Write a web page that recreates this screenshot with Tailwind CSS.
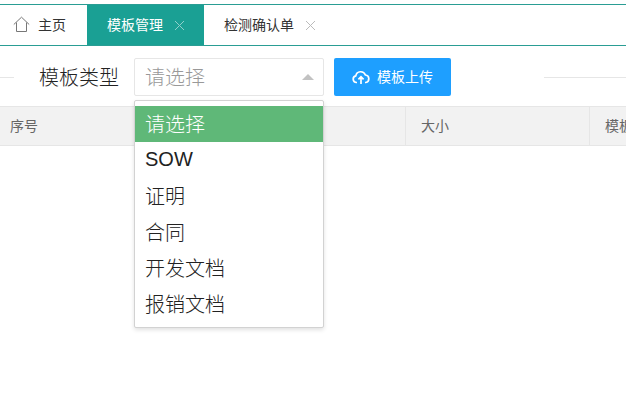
<!DOCTYPE html>
<html lang="zh-CN">
<head>
    <meta charset="UTF-8">
    <meta name="viewport" content="width=device-width, initial-scale=1.0">
    <title>模板管理</title>
    <script src="https://cdn.jsdelivr.net/npm/@tailwindcss/browser@4"></script>
</head>
<body class="bg-white h-[419px] w-[626px] overflow-hidden font-['Liberation_Sans','Noto_Sans_CJK_SC',sans-serif]">
    <!-- Tabs -->
    <div class="mt-1 h-[42px] border-y border-[#2a9d94] flex items-stretch text-[14px] text-[#333]">
        <div class="w-[87px] flex items-center pl-[13px]">
            <svg class="w-[17px] h-[17px] mr-2 -mt-[2px]" viewBox="0 0 17 17" fill="none" stroke="#777" stroke-width="1"><path d="M.8 8.5 8.5 1.2 16.2 8.5"/><path d="M3.5 6.5v9h10v-9"/></svg>
            <span>主页</span>
        </div>
        <div class="w-[117px] bg-[#1aa094] text-white flex items-center pl-5">
            <span>模板管理</span>
            <svg class="w-[11px] h-[11px] ml-[11px]" viewBox="0 0 11 11" stroke="#8fd0ca" stroke-width="1"><path d="M1 1l9 9M10 1l-9 9"/></svg>
        </div>
        <div class="flex items-center pl-5">
            <span>检测确认单</span>
            <svg class="w-[11px] h-[11px] ml-[11px]" viewBox="0 0 11 11" stroke="#bbb" stroke-width="1"><path d="M1 1l9 9M10 1l-9 9"/></svg>
        </div>
    </div>

    <!-- Toolbar -->
    <div class="mt-3 h-[38px] flex items-center">
        <div class="w-[14px] h-px bg-[#e6e6e6]"></div>
        <label class="ml-[25px] w-[95px] pt-[2px] text-[20px] text-[#222] font-light">模板类型</label>
        <div class="relative w-[190px] h-[38px] border border-[#e6e6e6] rounded-[2px] flex items-center justify-between pl-[10px] pr-[9px] text-[20px] text-[#999] font-light">
            <span class="pt-[2px]">请选择</span>
            <span class="w-0 h-0 border-x-[6px] border-x-transparent border-b-[6px] border-b-[#c2c2c2]"></span>
        </div>
        <button class="ml-[10px] w-[117px] h-[38px] bg-[#1e9fff] rounded-[2px] text-white text-[14px] flex items-center pl-[18px]">
            <svg class="w-[18px] h-[16px] mr-[7px] -mt-[1px]" viewBox="0 0 18 16" fill="none" stroke="#fff" stroke-width="1.7"><path d="M5 13.5H4.4A3.4 3.4 0 0 1 3.8 6.8 5 5 0 0 1 13.4 6 3.8 3.8 0 0 1 13.8 13.5H13"/><path d="M9 15V8M6.4 10.4 9 7.8l2.6 2.6"/></svg>
            <span>模板上传</span>
        </button>
        <div class="ml-[93px] flex-1 h-px bg-[#e6e6e6]"></div>
    </div>

    <!-- Table header -->
    <div class="mt-[10px] h-10 bg-[#f2f2f2] border-y border-[#e6e6e6] flex items-center text-[14px] text-[#666]">
        <div class="w-[405px] pl-[10px]">序号</div>
        <div class="w-[184px] h-full border-l border-[#e6e6e6] pl-[15px] flex items-center">大小</div>
        <div class="flex-1 h-full border-l border-[#e6e6e6] pl-[15px] flex items-center whitespace-nowrap overflow-hidden">模板名称</div>
    </div>

    <!-- Dropdown -->
    <div class="absolute left-[134px] top-[100px] w-[190px] h-[228px] bg-white border border-[#d2d2d2] rounded-[2px] shadow-[0_2px_4px_rgba(0,0,0,0.12)] pt-[5px] text-[20px] text-[#222] font-light">
        <div class="h-9 leading-[38px] pl-[10px] bg-[#5fb878] text-white">请选择</div>
        <div class="h-9 leading-[35px] pl-[10px]">SOW</div>
        <div class="h-9 leading-[38px] pl-[10px]">证明</div>
        <div class="h-9 leading-[38px] pl-[10px]">合同</div>
        <div class="h-9 leading-[38px] pl-[10px]">开发文档</div>
        <div class="h-9 leading-[38px] pl-[10px]">报销文档</div>
    </div>
</body>
</html>
